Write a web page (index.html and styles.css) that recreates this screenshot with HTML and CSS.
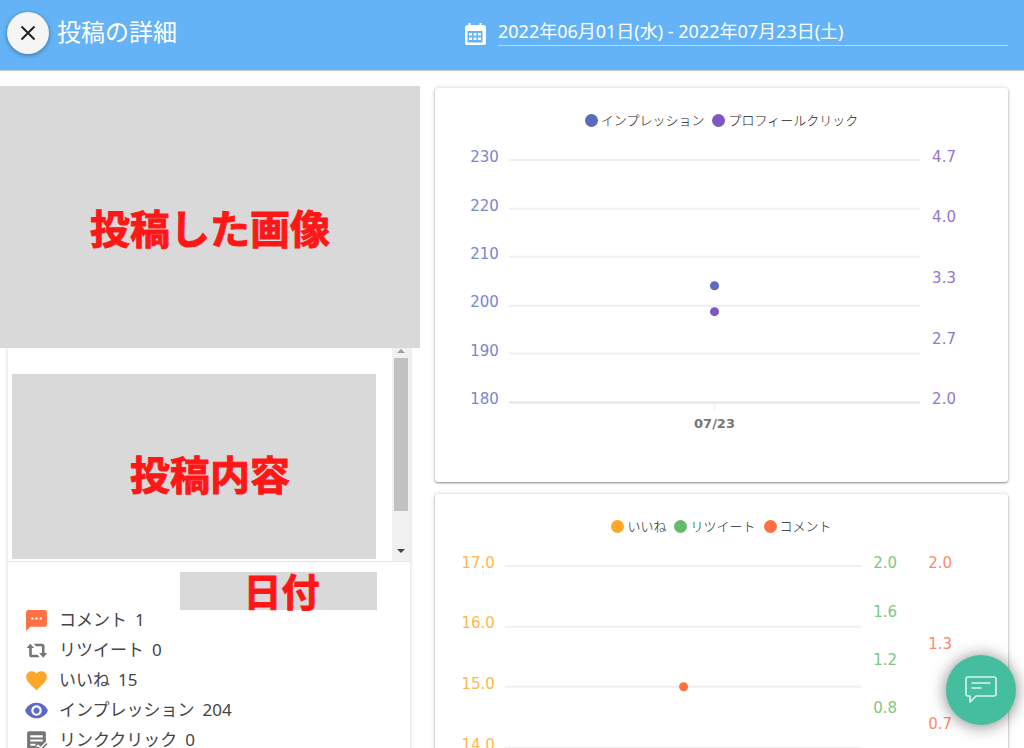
FILE: index.html
```html
<!DOCTYPE html>
<html lang="ja">
<head>
<meta charset="utf-8">
<meta name="viewport" content="width=device-width, initial-scale=1">
<title>投稿の詳細</title>
<link rel="stylesheet" href="styles.css">
</head>
<body>
<header class="topbar">
  <div class="topbar-title">
    <button class="close" type="button" aria-label="閉じる">
      <svg viewBox="0 0 24 24" width="24" height="24"><path d="M5.500 5.500l13 13M18.500 5.500l-13 13" stroke="#222" stroke-width="2" fill="none"/></svg>
    </button>
    <h1>投稿の詳細</h1>
  </div>
  <div class="topbar-date">
    <label for="range" aria-label="期間">
      <svg viewBox="0 0 26 26" width="26" height="26"><path fill="#fff" fill-rule="evenodd" d="M6.500 2h2v2h9V2h2v2h2a2.500 2.500 0 0 1 2.500 2.500V22a2 2 0 0 1-2 2H5a2 2 0 0 1-2-2V6.500A2.500 2.500 0 0 1 5.500 4h1zM5.500 10v11.500h15V10zM7 12h3v2.500H7zm4.500 0h3v2.500h-3zm4.500 0h3v2.500h-3zM7 16.500h3V19H7zm4.500 0h3V19h-3zm4.500 0h3V19h-3z"/></svg>
    </label>
    <input id="range" type="text" value="2022年06月01日(水) - 2022年07月23日(土)">
  </div>
</header>
<main class="layout">
  <section class="post">
    <div class="photo">投稿した画像</div>
    <div class="post-card">
      <div class="post-scroll">
        <div class="post-text">投稿内容</div>
        <div class="scrollbar">
          <svg class="arrow" viewBox="0 0 8 4"><path d="M0 4l4-4 4 4z" fill="#a0a0a0"/></svg>
          <div class="thumb"></div>
          <svg class="arrow" viewBox="0 0 8 4"><path d="M0 0l4 4 4-4z" fill="#444"/></svg>
        </div>
      </div>
      <div class="date">日付</div>
      <ul class="stats">
        <li><svg viewBox="0 0 24 24"><path fill="#ff7043" d="M20 2H4a2 2 0 0 0-2 2v18l4-4h14a2 2 0 0 0 2-2V4a2 2 0 0 0-2-2z"/><path fill="#fff" d="M7 9h2v2H7zm4 0h2v2h-2zm4 0h2v2h-2z"/></svg><span>コメント</span><span>1</span></li>
        <li><svg viewBox="0 0 24 24"><path fill="#757575" d="M6 5.500L2.500 9.500H5V16a2.500 2.500 0 0 0 2.500 2.500H15L13 16H7.500V9.500H9.800zM9.500 5.500l2 2.500h5.700v6.500H14.500l4 4.500 3.700-4.500h-2.500V8a2.500 2.500 0 0 0-2.500-2.500z"/></svg><span>リツイート</span><span>0</span></li>
        <li><svg viewBox="0 0 24 24"><path fill="#ffa726" d="M12 21.350l-1.450-1.320C5.400 15.360 2 12.280 2 8.500 2 5.420 4.420 3 7.500 3c1.740 0 3.410.81 4.500 2.090C13.090 3.810 14.760 3 16.500 3 19.580 3 22 5.420 22 8.500c0 3.780-3.400 6.860-8.550 11.540z"/></svg><span>いいね</span><span>15</span></li>
        <li><svg viewBox="0 0 24 24"><path fill="#5c6bc0" d="M12 4.500C7 4.500 2.730 7.610 1 12c1.730 4.390 6 7.500 11 7.500s9.270-3.110 11-7.500c-1.730-4.390-6-7.500-11-7.500zM12 17c-2.760 0-5-2.240-5-5s2.240-5 5-5 5 2.240 5 5-2.240 5-5 5zm0-8c-1.660 0-3 1.340-3 3s1.340 3 3 3 3-1.340 3-3-1.340-3-3-3z"/></svg><span>インプレッション</span><span>204</span></li>
        <li><svg viewBox="0 0 24 24"><path fill="#757575" fill-rule="evenodd" d="M5 3h14a2 2 0 0 1 2 2v8l-5 5-2.500-2.500-2 2L15.500 21H5a2 2 0 0 1-2-2V5a2 2 0 0 1 2-2zm1 4v2h12V7zm0 4v2h12v-2zm0 4v2h5v-2zM21.500 14.500l1 1L16 22l-3.500-3.500 1-1L16 20z"/></svg><span>リンククリック</span><span>0</span></li>
      </ul>
    </div>
  </section>
  <section class="charts">
    <article class="card">
      <ul class="legend">
        <li><i class="dot indigo"></i>インプレッション</li>
        <li><i class="dot purple"></i>プロフィールクリック</li>
      </ul>
      <svg class="plot" viewBox="0 0 574 353" role="img" aria-label="インプレッションとプロフィールクリック">
        <path class="grid" d="M74 30h412M74 79h412M74 127h412M74 176h412M74 224h412"/>
        <path class="axis" d="M74 273h412"/>
        <path class="grid" d="M280 274v6"/>
        <g class="t-indigo end">
          <text x="64" y="32">230</text><text x="64" y="81">220</text><text x="64" y="129">210</text><text x="64" y="177">200</text><text x="64" y="226">190</text><text x="64" y="274">180</text>
        </g>
        <g class="t-purple">
          <text x="498" y="32">4.7</text><text x="498" y="92">4.0</text><text x="498" y="153">3.3</text><text x="498" y="214">2.7</text><text x="498" y="274">2.0</text>
        </g>
        <text class="tick" x="280" y="299">07/23</text>
        <circle cx="280" cy="156" r="4.500" fill="#5c6bc0"/>
        <circle cx="280" cy="182" r="4.500" fill="#7e57c2"/>
      </svg>
    </article>
    <article class="card">
      <ul class="legend">
        <li><i class="dot orange"></i>いいね</li>
        <li><i class="dot green"></i>リツイート</li>
        <li><i class="dot coral"></i>コメント</li>
      </ul>
      <svg class="plot" viewBox="0 0 574 353" role="img" aria-label="いいね、リツイート、コメント">
        <path class="grid" d="M70 30h357M70 91h357M70 151h357M70 212h357M70 272h357"/>
        <g class="t-orange end">
          <text x="60" y="32">17.0</text><text x="60" y="92">16.0</text><text x="60" y="153">15.0</text><text x="60" y="214">14.0</text><text x="60" y="274">13.0</text>
        </g>
        <g class="t-green">
          <text x="439" y="32">2.0</text><text x="439" y="81">1.6</text><text x="439" y="129">1.2</text><text x="439" y="177">0.8</text>
        </g>
        <g class="t-coral">
          <text x="494" y="32">2.0</text><text x="494" y="113">1.3</text><text x="494" y="193">0.7</text>
        </g>
        <circle cx="249" cy="151" r="4.500" fill="#ff7043"/>
      </svg>
    </article>
  </section>
</main>
<button class="chat" type="button" aria-label="チャット">
  <svg viewBox="0 0 32 30" width="32" height="30"><path d="M3 2h26a2 2 0 0 1 2 2v15a2 2 0 0 1-2 2H11l-6 6v-6H3a2 2 0 0 1-2-2V4a2 2 0 0 1 2-2zM7 8h18M7 13h9" fill="none" stroke="#d9f5ec" stroke-width="1.600" stroke-linejoin="round" stroke-linecap="round"/></svg>
</button>
</body>
</html>
```
FILE: styles.css
```css
* { box-sizing: border-box; }

body {
  margin: 0;
  height: 100vh;
  overflow: hidden;
  display: flex;
  flex-direction: column;
  background: #fff;
  color: #444;
  font-family: "Noto Sans", "Noto Sans CJK JP", sans-serif;
}

ul { margin: 0; padding: 0; list-style: none; }
button { border: 0; padding: 0; cursor: pointer; }

.topbar, .layout {
  display: grid;
  grid-template-columns: 5fr 7fr;
  padding-right: 16px;
}

.topbar {
  flex: none;
  height: 70px;
  background: #64b3f6;
  color: #fff;
  box-shadow: 0 1px 1px rgba(0, 0, 0, .2);
}

.topbar-title {
  display: flex;
  align-items: center;
  gap: 8px;
  padding: 0 0 5px 7px;
}
.topbar h1 {
  margin: 0;
  padding-bottom: 2px;
  font-size: 24px;
  line-height: 32px;
  font-weight: 400;
}

.close {
  display: grid;
  place-items: center;
  width: 42px;
  height: 42px;
  border-radius: 50%;
  background: #f5f5f5;
  box-shadow: 0 1px 4px rgba(0, 0, 0, .4);
}
.close svg { display: block; }

.topbar-date {
  display: flex;
  align-items: center;
  gap: 10px;
  padding: 0 0 2px 42px;
}
.topbar-date svg { display: block; }
.topbar-date input {
  flex: 1;
  min-width: 0;
  height: 30px;
  margin-bottom: 6px;
  padding: 0 0 2px;
  border: 0;
  border-bottom: 1px solid #b4dafa;
  background: transparent;
  color: #fff;
  font: 18px "Noto Sans", "Noto Sans CJK JP", sans-serif;
}

.layout { flex: 1; min-height: 0; padding-top: 16px; overflow: hidden; }

.post { display: flex; flex-direction: column; min-width: 0; }

.photo, .post-text, .date {
  display: grid;
  place-items: center;
  background: #d9d9d9;
  color: #ff1717;
  font-family: "Noto Sans CJK JP", sans-serif;
  font-size: 40px;
  line-height: 40px;
  font-weight: 700;
  -webkit-text-stroke: 1px #ff1717;
  stroke-linejoin: round;
}
.photo { height: 262px; padding-top: 20px; z-index: 1; }

.post-card {
  flex: 1;
  margin: 0 10px 0 8px;
  background: #fff;
  box-shadow: 0 0 4px rgba(0, 0, 0, .2);
}
.post-scroll {
  display: flex;
  justify-content: space-between;
  height: 214px;
  padding-left: 4px;
  border-bottom: 1px solid #e4e4e4;
}
.post-text {
  flex: 1;
  margin: 26px 16px 2px 0;
  padding: 12px 0 0 32px;
}
.scrollbar {
  display: flex;
  flex-direction: column;
  align-items: center;
  width: 18px;
  background: #f1f1f1;
}
.arrow { width: 8px; height: 4px; margin: 1px 0 5px; }
.thumb { width: 14px; height: 153px; background: #c1c1c1; }
.arrow:last-child { margin: auto 0 8px; }

.date {
  width: 197px;
  height: 38px;
  margin: 10px 33px 0 auto;
  padding-left: 6px;
  font-size: 38px;
  line-height: 36px;
  align-content: start;
}

.stats { margin-top: -5px; padding-left: 16px; }
.stats li {
  display: flex;
  align-items: center;
  gap: 8px;
  height: 30px;
  font-size: 17px;
  line-height: 24px;
}
.stats svg { width: 25px; height: 25px; margin: 1px 2px 0 0; }

.charts {
  display: flex;
  flex-direction: column;
  gap: 12px;
  min-width: 0;
  padding: 2px 0 0 15px;
}
.card {
  flex: none;
  padding-top: 23px;
  border-radius: 3px;
  background: #fff;
  box-shadow: 0 1px 2px rgba(0, 0, 0, .4), 0 0 5px rgba(0, 0, 0, .15);
}
.legend {
  display: flex;
  justify-content: center;
  gap: 8px;
  margin-bottom: 1px;
  font-size: 13px;
  line-height: 18px;
  font-family: "Noto Sans CJK JP", sans-serif;
  font-weight: 300;
  color: #222;
}
.legend li { display: flex; align-items: center; gap: 3px; }
.dot { width: 13px; height: 13px; border-radius: 50%; }
.indigo { background: #5c6bc0; }
.purple { background: #7e57c2; }
.orange { background: #ffa726; }
.green { background: #66bb6a; }
.coral { background: #ff7043; }

.plot {
  display: block;
  width: 100%;
  font-family: "DejaVu Sans", sans-serif;
  font-size: 15px;
}
.grid { stroke: #f0f0f0; stroke-width: 2; }
.axis { stroke: #e4e4e4; stroke-width: 2; }
.end { text-anchor: end; }
.t-indigo { fill: #7986cb; }
.t-purple { fill: #9575cd; }
.t-orange { fill: #ffb74d; }
.t-green { fill: #81c784; }
.t-coral { fill: #ff8a65; }
.tick { fill: #757575; font-size: 13px; font-weight: 700; text-anchor: middle; }

.chat {
  position: fixed;
  right: 8px;
  bottom: 23px;
  z-index: 2;
  display: grid;
  place-items: center;
  width: 70px;
  height: 70px;
  border-radius: 50%;
  background: #45bd9f;
  box-shadow: 0 1px 16px rgba(0, 0, 0, .5);
}
```
